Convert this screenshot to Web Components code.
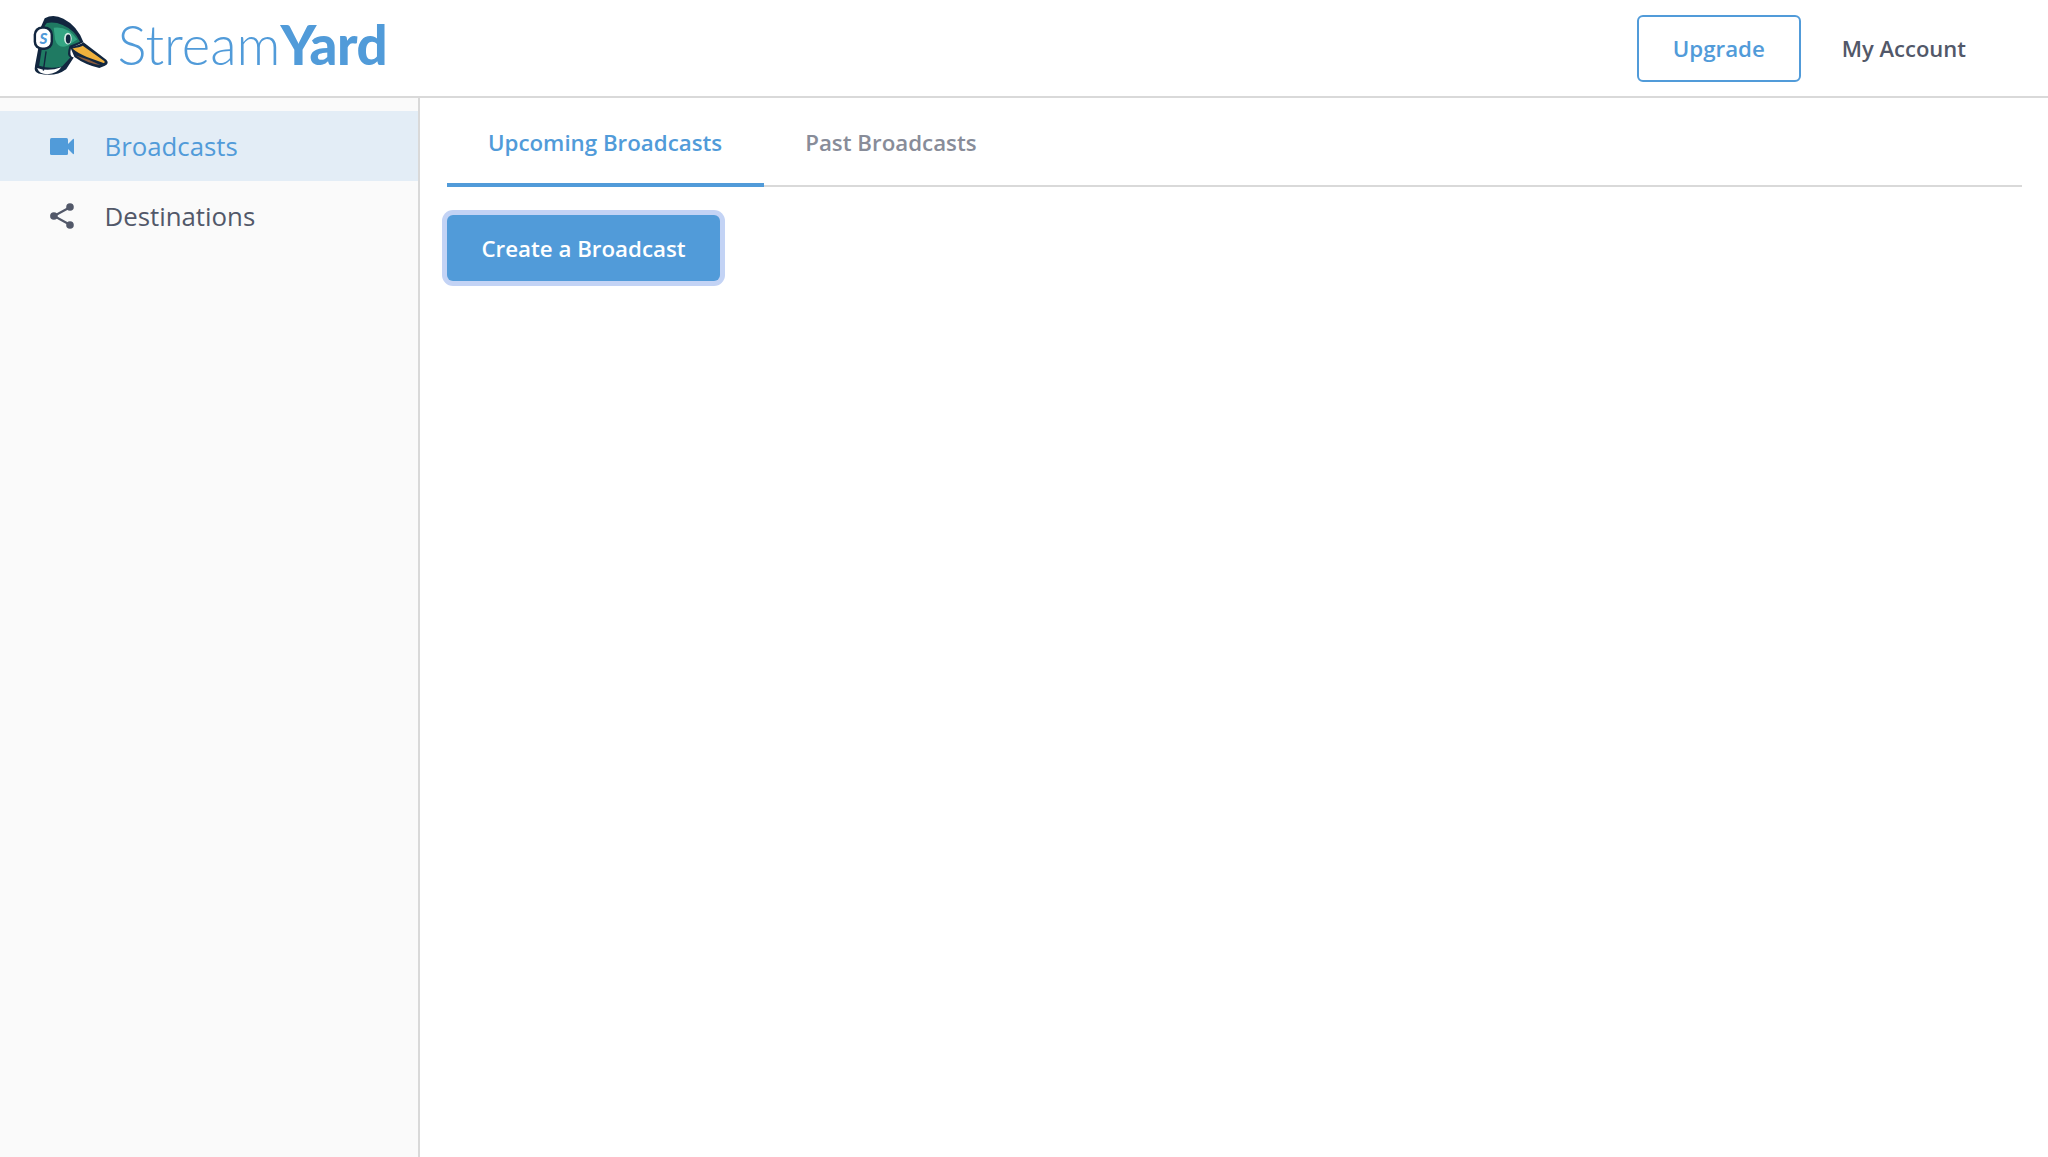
<!DOCTYPE html>
<html lang="en">
<head>
<meta charset="utf-8">
<title>StreamYard</title>
<style>
  html, body { margin: 0; height: 100%; background: #fff; }
  body { font-family: "Open Sans", "Liberation Sans", sans-serif; }
</style>
</head>
<body>
<sy-app>
  <sy-header slot="header">
    <sy-logo slot="logo"></sy-logo>
    <sy-button slot="actions" variant="outline">Upgrade</sy-button>
    <sy-button slot="actions" variant="plain">My Account</sy-button>
  </sy-header>
  <sy-sidebar slot="sidebar">
    <sy-nav-item active icon="camera">Broadcasts</sy-nav-item>
    <sy-nav-item icon="share">Destinations</sy-nav-item>
  </sy-sidebar>
  <sy-main slot="main">
    <sy-tabs>
      <sy-tab active>Upcoming Broadcasts</sy-tab>
      <sy-tab>Past Broadcasts</sy-tab>
    </sy-tabs>
    <sy-button variant="primary">Create a Broadcast</sy-button>
  </sy-main>
</sy-app>

<script>
const BLUE = "#519bd9";

const ICONS = {
  camera: /* html */`
    <svg width="24" height="17" viewBox="0 0 24 17">
      <rect x="0" y="0" width="18" height="17" rx="1.5" fill="currentColor"/>
      <path d="M17.5 6.5 L23 1 Q24 0.5 24 1.8 V15.2 Q24 16.5 23 16 L17.5 10.5 Z" fill="currentColor"/>
    </svg>`,
  share: /* html */`
    <svg width="24" height="26" viewBox="0 0 24 26">
      <path d="M19.5 4.5 L4 13 L19.5 21.5" fill="none" stroke="currentColor" stroke-width="2.2"/>
      <circle cx="20" cy="4" r="3.8" fill="currentColor"/>
      <circle cx="3.9" cy="13" r="3.8" fill="currentColor"/>
      <circle cx="20" cy="22" r="3.8" fill="currentColor"/>
    </svg>`,
};

class SyApp extends HTMLElement {
  constructor() {
    super();
    this.attachShadow({ mode: "open" });
    this.shadowRoot.innerHTML = /* html */`
      <style>
        :host {
          display: grid;
          grid-template-columns: 420px 1fr;
          grid-template-rows: 98px 1fr;
          height: 100vh;
          overflow: hidden;
        }
        ::slotted([slot="header"]) { grid-column: 1 / 3; }
      </style>
      <slot name="header"></slot>
      <slot name="sidebar"></slot>
      <slot name="main"></slot>
    `;
  }
}

class SyHeader extends HTMLElement {
  constructor() {
    super();
    this.attachShadow({ mode: "open" });
    this.shadowRoot.innerHTML = /* html */`
      <style>
        :host {
          display: flex;
          align-items: center;
          justify-content: space-between;
          box-sizing: border-box;
          height: 98px;
          padding: 0 82px 0 19px;
          border-bottom: 2px solid #d9d9d9;
          background: #fff;
        }
        .actions { display: flex; align-items: center; gap: 41px; }
      </style>
      <slot name="logo"></slot>
      <div class="actions"><slot name="actions"></slot></div>
    `;
  }
}

class SyLogo extends HTMLElement {
  constructor() {
    super();
    this.attachShadow({ mode: "open" });
    this.shadowRoot.innerHTML = /* html */`
      <style>
        :host {
          display: flex;
          align-items: center;
          font-family: Lato, "Noto Sans", sans-serif;
          font-size: 54.5px;
          line-height: 1;
          color: ${BLUE};
        }
        svg { display: block; flex: none; margin: -4px -5.5px 0 0; }
        .word { margin-top: -7px; }
        .light { font-weight: 300; }
        .bold { font-weight: 900; letter-spacing: -0.5px; }
      </style>
      <svg width="104" height="83" viewBox="0 0 300 240">
        <!-- bill -->
        <path d="M148 122 Q178 116 186 108 L252 158 Q262 168 248 176 L232 182 Q190 172 160 150 Z" fill="#12263f"/>
        <path d="M154 126 Q176 122 184 118 L246 162 Q250 166 244 168 L196 150 Q170 140 154 126 Z" fill="#f0b13c"/>
        <path d="M164 146 Q200 156 236 174 Q200 170 164 146 Z" fill="#8a5a3c"/>
        <!-- head outline -->
        <path d="M74 38 Q100 24 128 40 Q168 60 186 108 L150 124 Q144 150 158 152 L136 186 Q104 210 56 198 Q42 194 46 176 L56 122 L62 66 Z" fill="#12263f"/>
        <!-- green -->
        <path d="M80 52 Q104 48 126 58 Q160 72 176 106 L146 118 Q136 146 148 152 L124 178 Q90 186 58 176 L66 124 L74 60 Z" fill="#1f7a62"/>
        <path d="M100 66 Q140 60 168 100 L140 118 Q112 128 104 100 Z" fill="#35a583"/>
        <!-- collar -->
        <path d="M52 182 Q84 194 122 180 Q110 198 82 200 Q58 200 52 182 Z" fill="#fff"/>
        <!-- eye -->
        <ellipse cx="141" cy="97" rx="11" ry="17" fill="#d8efe6"/>
        <ellipse cx="142" cy="98" rx="7" ry="13" fill="#12263f"/>
        <!-- earphone -->
        <path d="M78 134 L70 190" stroke="#12263f" stroke-width="4" fill="none"/>
        <rect x="42" y="62" width="56" height="68" rx="24" fill="#12263f"/>
        <rect x="49" y="69" width="42" height="54" rx="18" fill="#fff"/>
        <text x="70" y="113" text-anchor="middle" font-family="Lato, sans-serif" font-weight="900" font-style="italic" font-size="44" fill="${BLUE}">S</text>
      </svg>
      <span class="word"><span class="light">Stream</span><span class="bold">Yard</span></span>
    `;
  }
}

class SyButton extends HTMLElement {
  constructor() {
    super();
    this.attachShadow({ mode: "open" });
    this.shadowRoot.innerHTML = /* html */`
      <style>
        :host {
          display: inline-flex;
          align-items: center;
          justify-content: center;
          box-sizing: border-box;
          font-size: 22.3px;
          font-weight: 600;
          border-radius: 6px;
          white-space: nowrap;
        }
        :host([variant="outline"]) {
          width: 164px;
          height: 67px;
          border: 2px solid ${BLUE};
          color: ${BLUE};
          background: #fff;
        }
        :host([variant="plain"]) {
          font-size: 22px;
          color: #525869;
        }
        :host([variant="primary"]) {
          width: 273px;
          height: 66px;
          margin: 28px 0 0 0;
          color: #fff;
          background: ${BLUE};
          box-shadow: 0 0 0 5px #c3d3f5;
        }
      </style>
      <slot></slot>
    `;
  }
}

class SySidebar extends HTMLElement {
  constructor() {
    super();
    this.attachShadow({ mode: "open" });
    this.shadowRoot.innerHTML = /* html */`
      <style>
        :host {
          display: block;
          box-sizing: border-box;
          height: 100%;
          padding-top: 13px;
          background: #fafafa;
          border-right: 2px solid #d9d9d9;
        }
      </style>
      <slot></slot>
    `;
  }
}

class SyNavItem extends HTMLElement {
  constructor() {
    super();
    this.attachShadow({ mode: "open" });
    this.shadowRoot.innerHTML = /* html */`
      <style>
        :host {
          display: flex;
          align-items: center;
          height: 70px;
          padding-left: 50px;
          gap: 30.5px;
          font-size: 25.8px;
          color: #525869;
        }
        :host([active]) {
          color: ${BLUE};
          background: #e3edf6;
        }
        .icon { display: flex; width: 24px; justify-content: center; }
        svg { display: block; }
      </style>
      <span class="icon">${ICONS[this.getAttribute("icon")]}</span>
      <slot></slot>
    `;
  }
}

class SyMain extends HTMLElement {
  constructor() {
    super();
    this.attachShadow({ mode: "open" });
    this.shadowRoot.innerHTML = /* html */`
      <style>
        :host {
          display: block;
          padding: 0 26px 0 27px;
          background: #fff;
        }
      </style>
      <slot></slot>
    `;
  }
}

class SyTabs extends HTMLElement {
  constructor() {
    super();
    this.attachShadow({ mode: "open" });
    this.shadowRoot.innerHTML = /* html */`
      <style>
        :host {
          display: flex;
          height: 89px;
          box-sizing: border-box;
          border-bottom: 2px solid #d9d9d9;
        }
      </style>
      <slot></slot>
    `;
  }
}

class SyTab extends HTMLElement {
  constructor() {
    super();
    this.attachShadow({ mode: "open" });
    this.shadowRoot.innerHTML = /* html */`
      <style>
        :host {
          display: flex;
          align-items: center;
          box-sizing: border-box;
          height: 89px;
          padding: 3px 41px 4px 41px;
          font-size: 22.3px;
          font-weight: 600;
          color: #888c99;
        }
        :host([active]) {
          color: ${BLUE};
          border-bottom: 4px solid ${BLUE};
          padding: 3px 42px 0 41px;
        }
      </style>
      <slot></slot>
    `;
  }
}

customElements.define("sy-app", SyApp);
customElements.define("sy-header", SyHeader);
customElements.define("sy-logo", SyLogo);
customElements.define("sy-button", SyButton);
customElements.define("sy-sidebar", SySidebar);
customElements.define("sy-nav-item", SyNavItem);
customElements.define("sy-main", SyMain);
customElements.define("sy-tabs", SyTabs);
customElements.define("sy-tab", SyTab);
</script>
</body>
</html>
